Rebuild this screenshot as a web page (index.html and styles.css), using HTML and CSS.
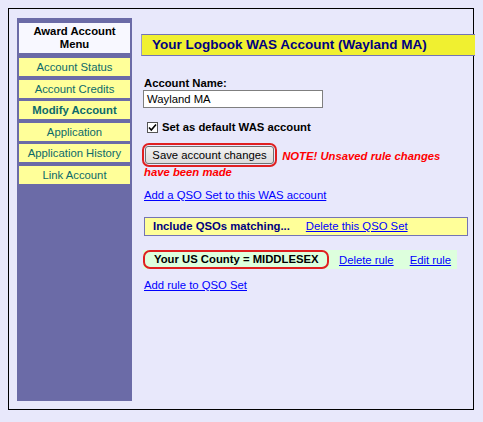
FILE: index.html
```html
<!DOCTYPE html>
<html>
<head>
<meta charset="utf-8">
<link rel="stylesheet" href="styles.css">
</head>
<body>
<div class="frame">
  <nav class="sidebar">
    <div class="menu-head">Award Account<br>Menu</div>
    <div class="menu-item">Account Status</div>
    <div class="menu-item">Account Credits</div>
    <div class="menu-item current">Modify Account</div>
    <div class="menu-item">Application</div>
    <div class="menu-item">Application History</div>
    <div class="menu-item">Link Account</div>
  </nav>
  <main class="main">
    <h1 class="title">Your Logbook WAS Account (Wayland MA)</h1>
    <div class="content">
      <div class="label">Account Name:</div>
      <div class="input">Wayland MA</div>
      <div class="check-row">
        <span class="checkbox"><svg width="11" height="11" viewBox="0 0 11 11"><path d="M2 5.5 L4.3 8 L9 2.5" fill="none" stroke="#000" stroke-width="1.6"/></svg></span>
        <span class="bold">Set as default WAS account</span>
      </div>
      <div class="save-row">
        <span class="ring save-ring"><span class="button">Save account changes</span></span>
        <span class="note">NOTE! Unsaved rule changes have been made</span>
      </div>
      <a class="link add-set" href="#">Add a QSO Set to this WAS account</a>
      <div class="qso-set">
        <span class="set-title">Include QSOs matching...</span>
        <a class="link" href="#">Delete this QSO Set</a>
      </div>
      <div class="rule">
        <span class="ring rule-ring">Your US County = MIDDLESEX</span>
        <a class="link rule-link" href="#">Delete rule</a>
        <a class="link rule-link" href="#">Edit rule</a>
      </div>
      <a class="link add-rule" href="#">Add rule to QSO Set</a>
    </div>
  </main>
</div>
</body>
</html>
```

FILE: styles.css
```css
html, body {
  background: #e8e8fb;
}
body {
  margin: 8px;
  font-family: "Liberation Sans", Arial, sans-serif;
  font-size: 11.3px;
  line-height: 14px;
  color: #000;
}
.frame {
  width: 466px;
  height: 402px;
  border: 1px solid #000;
  display: flex;
  align-items: stretch;
  padding: 9px 0 8px 8px;
  box-sizing: border-box;
}
.sidebar {
  width: 115px;
  background: #6b6ba7;
  padding: 5px 2px;
  box-sizing: border-box;
  display: flex;
  flex-direction: column;
  gap: 3.5px;
  flex-shrink: 0;
}
.menu-head {
  background: #f8f8ff;
  height: 30px;
  font-weight: bold;
  text-align: center;
  line-height: 13px;
  padding-top: 2px;
  box-sizing: border-box;
  margin-bottom: 1.5px;
}
.menu-item {
  background: #ffff99;
  height: 18px;
  line-height: 18px;
  text-align: center;
  color: #0d6a6a;
  white-space: nowrap;
}
.menu-item.current {
  font-weight: bold;
}
.main {
  flex: 1;
  min-width: 0;
  padding-top: 16px;
  margin-left: 9px;
}
.title {
  margin: 0 -3px 0 0;
  height: 22px;
  box-sizing: border-box;
  background: #f0f030;
  border-top: 1px solid #7474b4;
  border-bottom: 1px solid #7474b4;
  border-left: 1px solid #9a9ac8;
  color: #000080;
  font-size: 13.5px;
  line-height: 20px;
  padding-left: 10px;
  font-weight: bold;
  white-space: nowrap;
}
.content {
  padding: 20px 5px 0 3px;
  display: flex;
  flex-direction: column;
  align-items: flex-start;
}
.label {
  font-weight: bold;
}
.input {
  width: 180px;
  height: 18px;
  box-sizing: border-box;
  border: 1px solid #7f7f7f;
  background: #fff;
  padding-left: 3px;
  line-height: 16px;
  margin-left: -1px;
}
.check-row {
  margin-top: 12px;
  display: flex;
  align-items: center;
  gap: 4px;
  padding-left: 3px;
}
.checkbox {
  width: 11px;
  height: 11px;
  box-sizing: border-box;
  border: 1px solid #555;
  background: #fff;
  display: flex;
}
.checkbox svg {
  margin: -1px;
}
.bold { font-weight: bold; }
.save-row {
  margin-top: 13px;
  width: 320px;
}
.ring {
  border: 2.5px solid #e02020;
  border-radius: 7px;
  white-space: nowrap;
}
.save-ring {
  display: inline-block;
  padding: 1px;
  vertical-align: middle;
  margin: -4px 0 -3px -2px;
}
.button {
  display: inline-block;
  height: 18px;
  line-height: 16px;
  box-sizing: border-box;
  border: 1px solid #707070;
  border-radius: 3px;
  background: linear-gradient(#f2f2f2, #dcdcdc);
  width: 129px;
  text-align: center;
  white-space: nowrap;
}
.note {
  color: #ff0000;
  font-style: italic;
  font-weight: bold;
  margin-left: 2px;
  vertical-align: middle;
}
.link {
  color: #0000ff;
  text-decoration: underline;
  white-space: nowrap;
}
.add-set {
  margin-top: 9px;
}
.qso-set {
  margin-top: 15px;
  width: 324px;
  height: 19px;
  box-sizing: border-box;
  background: #ffff99;
  border: 1px solid #7474b4;
  padding-left: 8px;
  line-height: 16px;
  display: flex;
  gap: 16px;
}
.set-title {
  font-weight: bold;
  color: #000080;
}
.rule {
  margin-top: 14px;
  background: #ddffdd;
  width: 314px;
  display: flex;
  align-items: center;
  margin-left: -1px;
}
.rule-ring {
  font-weight: bold;
  padding: 1px 9px;
  line-height: 13px;
  width: 186px;
  box-sizing: border-box;
}
.rule-link {
  margin-left: 10px;
}
.rule-link + .rule-link {
  margin-left: 16px;
}
.add-rule {
  margin-top: 9px;
}
```
